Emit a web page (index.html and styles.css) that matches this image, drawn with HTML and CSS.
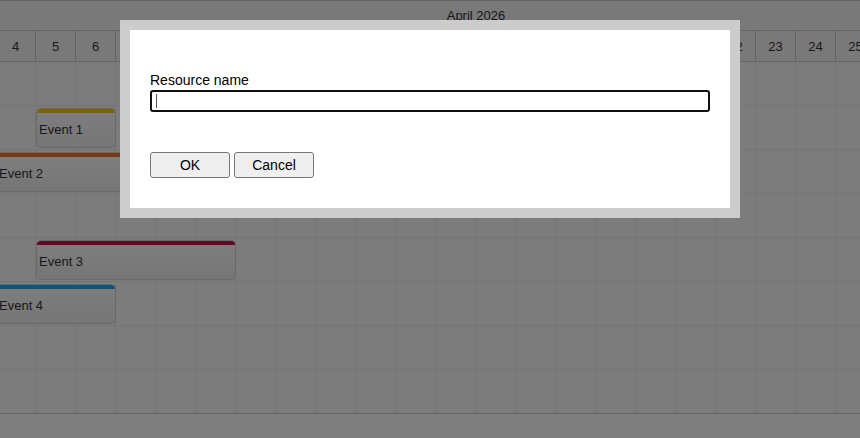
FILE: index.html
```html
<!DOCTYPE html>
<html lang="en">
<head>
<meta charset="utf-8">
<title>Scheduler</title>
<link rel="stylesheet" href="styles.css">
</head>
<body>
<div class="scheduler">
  <div class="timeline">
    <div class="month-row"><div class="month">April 2026</div></div>
    <div class="day-row">
      <div class="day">1</div><div class="day">2</div><div class="day">3</div><div class="day">4</div><div class="day">5</div>
      <div class="day">6</div><div class="day">7</div><div class="day">8</div><div class="day">9</div><div class="day">10</div>
      <div class="day">11</div><div class="day">12</div><div class="day">13</div><div class="day">14</div><div class="day">15</div>
      <div class="day">16</div><div class="day">17</div><div class="day">18</div><div class="day">19</div><div class="day">20</div>
      <div class="day">21</div><div class="day">22</div><div class="day">23</div><div class="day">24</div><div class="day">25</div>
      <div class="day">26</div><div class="day">27</div><div class="day">28</div><div class="day">29</div><div class="day">30</div>
    </div>
    <div class="grid">
      <div class="row"></div>
      <div class="row">
        <div class="event ev-yellow" style="left:160px;width:80px"><span class="bar"></span>Event 1</div>
      </div>
      <div class="row">
        <div class="event ev-orange" style="left:120px;width:160px"><span class="bar"></span>Event 2</div>
      </div>
      <div class="row"></div>
      <div class="row">
        <div class="event ev-red" style="left:160px;width:200px"><span class="bar"></span>Event 3</div>
      </div>
      <div class="row">
        <div class="event ev-blue" style="left:120px;width:120px"><span class="bar"></span>Event 4</div>
      </div>
      <div class="row"></div>
      <div class="row"></div>
    </div>
  </div>
</div>

<div class="overlay"></div>
<div class="modal">
  <div class="modal-body">
    <div class="field-label">Resource name</div>
    <div class="text-input" role="textbox" aria-label="Resource name"><span class="caret"></span></div>
    <div class="buttons">
      <button class="btn" type="button">OK</button>
      <button class="btn" type="button">Cancel</button>
    </div>
  </div>
</div>
</body>
</html>
```

FILE: styles.css
```css
html, body {
  margin: 0;
  padding: 0;
  background: #ffffff;
  font-family: "Liberation Sans", Arial, sans-serif;
  color: #333333;
}

.scheduler {
  width: 860px;
  overflow: hidden;
  border-top: 1px solid #c8c8c8;
  border-bottom: 1px solid #c8c8c8;
}

.timeline {
  width: 1200px;
  margin-left: -124px;
}

.month-row {
  height: 29px;
  background: #f3f3f3;
  border-bottom: 1px solid #c8c8c8;
  display: flex;
}

.month {
  flex: 1;
  display: flex;
  align-items: center;
  justify-content: center;
  font-size: 13px;
  color: #333333;
}

.day-row {
  height: 30px;
  display: flex;
  background: #f3f3f3;
  border-bottom: 1px solid #c8c8c8;
}

.day {
  width: 40px;
  box-sizing: border-box;
  border-right: 1px solid #c8c8c8;
  display: flex;
  align-items: center;
  justify-content: center;
  font-size: 13px;
  color: #333333;
}

.grid {
  background-color: #f8f8f8;
  background-image: linear-gradient(to right, transparent 39px, #e8e8e8 39px);
  background-size: 40px 100%;
}

.row {
  position: relative;
  height: 43px;
  border-bottom: 1px solid #e8e8e8;
}

.row:last-child {
  border-bottom: none;
}

.event {
  position: absolute;
  top: 2px;
  height: 40px;
  box-sizing: border-box;
  border: 1px solid #d0d0d0;
  border-radius: 5px;
  background: linear-gradient(#fdfdfd, #ececec);
  font-size: 13px;
  color: #333333;
  padding: 3px 0 0 2px;
  display: flex;
  align-items: center;
  overflow: hidden;
  white-space: nowrap;
}

.event .bar {
  position: absolute;
  left: -1px;
  right: -1px;
  top: -1px;
  height: 5px;
  border-radius: 5px 5px 0 0;
}

.ev-yellow .bar { background: #f6c515; }
.ev-orange .bar { background: #f07426; }
.ev-red .bar { background: #d6004e; }
.ev-blue .bar { background: #14aef5; }

.overlay {
  position: fixed;
  inset: 0;
  background: rgba(0, 0, 0, 0.5);
}

.modal {
  position: absolute;
  left: 120px;
  top: 20px;
  width: 620px;
  box-sizing: border-box;
  border: 10px solid #cccccc;
  background: #ffffff;
}

.modal-body {
  padding: 42px 20px 30px 20px;
}

.field-label {
  font-size: 14px;
  line-height: 16px;
  color: #000000;
}

.text-input {
  margin-top: 2px;
  height: 22px;
  box-sizing: border-box;
  border: 2px solid #101010;
  border-radius: 3px;
  background: #ffffff;
  padding: 2px 0 0 4px;
}

.caret {
  display: block;
  width: 1px;
  height: 14px;
  background: #555555;
}

.buttons {
  margin-top: 40px;
  display: flex;
  gap: 4px;
}

.btn {
  width: 80px;
  height: 26px;
  box-sizing: border-box;
  border: 1px solid #767676;
  border-radius: 3px;
  background: #efefef;
  font-family: "Liberation Sans", Arial, sans-serif;
  font-size: 14px;
  color: #000000;
  padding: 0;
  margin: 0;
}
```
